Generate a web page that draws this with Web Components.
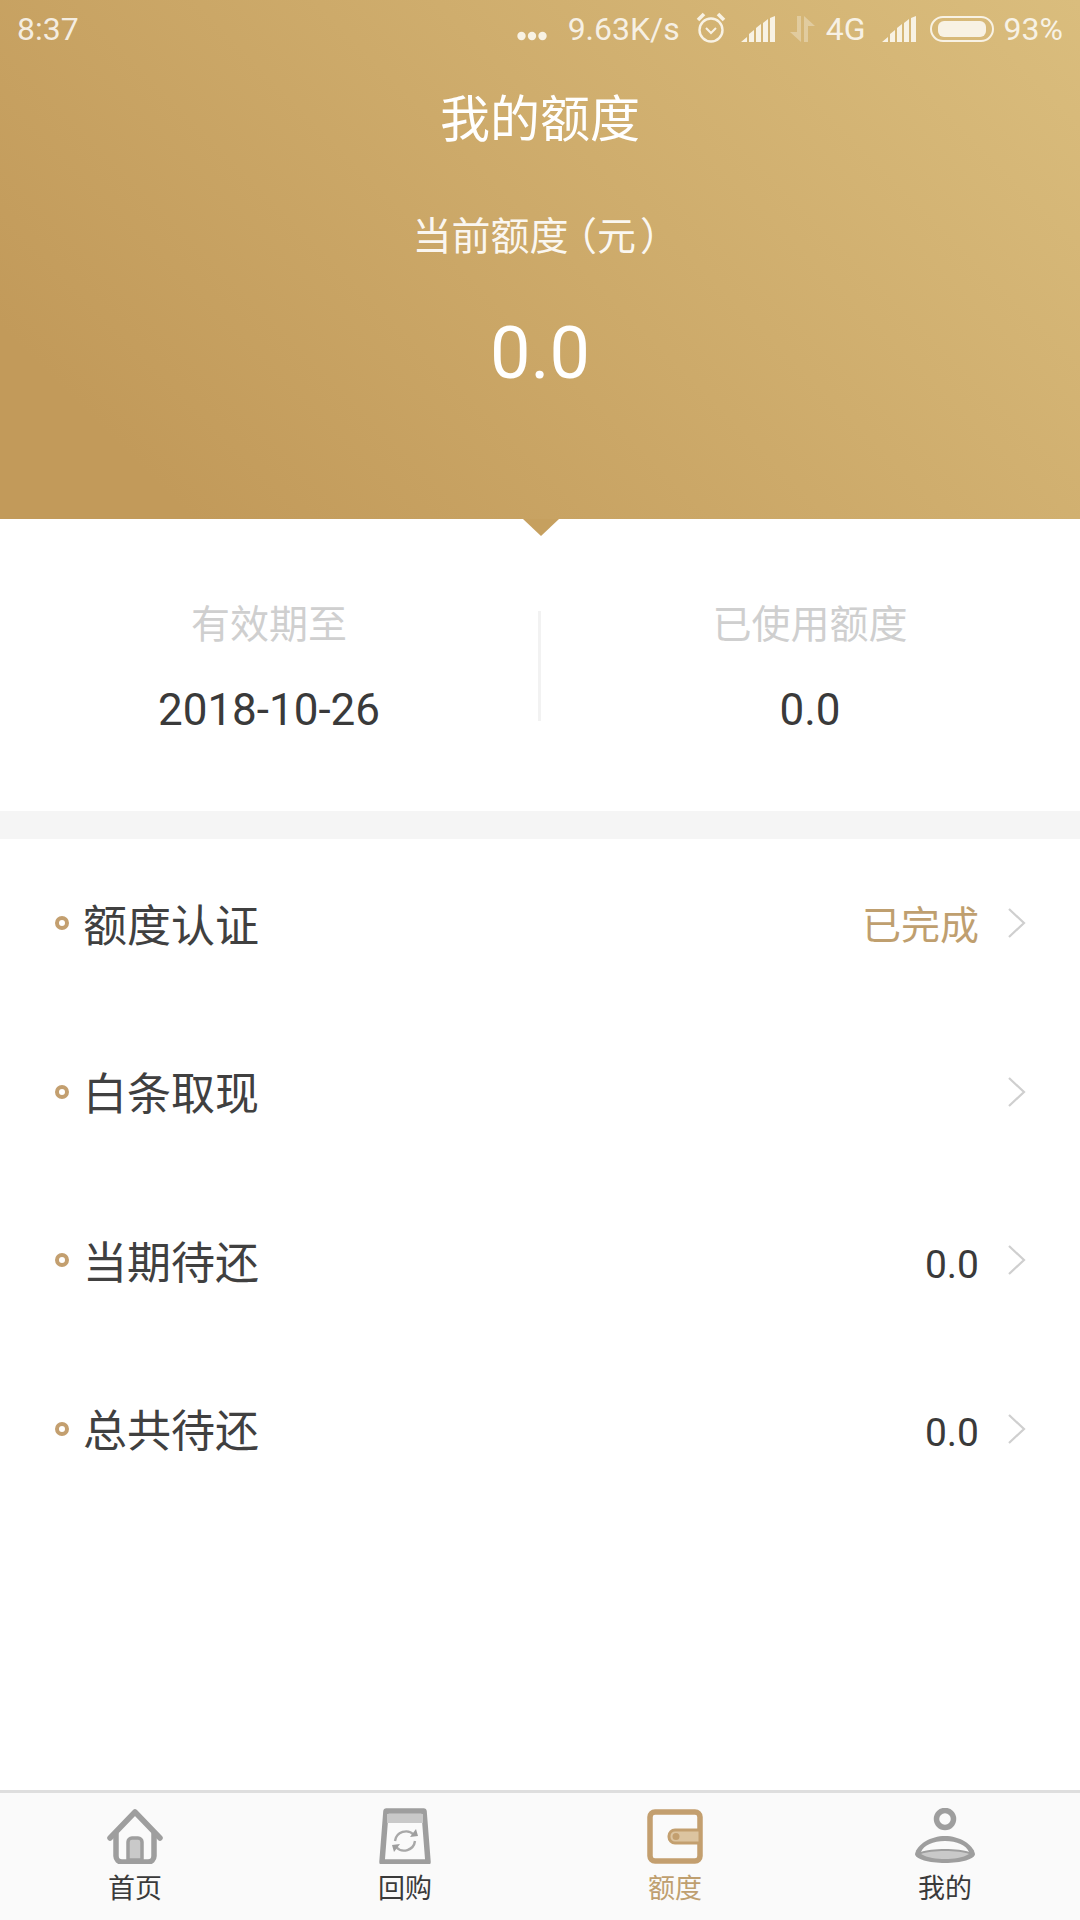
<!DOCTYPE html>
<html>
<head>
<meta charset="utf-8">
<style>
  html, body { margin: 0; padding: 0; background: #fff; }
  body { font-family: Roboto, "Noto Sans CJK SC", sans-serif; width: 1080px; height: 1920px; }
  quota-app { width: 1080px; height: 1920px; }
  .paren { font-feature-settings: "halt"; }
</style>
</head>
<body>
<quota-app>
  <quota-header slot="header" title="我的额度" amount="0.0">当前额度<span class="paren" style="margin-left:9px">（</span>元<span class="paren" style="margin-left:4px">）</span></quota-header>
  <quota-stats slot="stats">
    <stat-cell label="有效期至" value="2018-10-26"></stat-cell>
    <stat-cell label="已使用额度" value="0.0"></stat-cell>
  </quota-stats>
  <menu-row slot="menu" label="额度认证" value="已完成" gold></menu-row>
  <menu-row slot="menu" label="白条取现"></menu-row>
  <menu-row slot="menu" label="当期待还" value="0.0"></menu-row>
  <menu-row slot="menu" label="总共待还" value="0.0"></menu-row>
  <tab-bar slot="tabs">
    <tab-item icon="home" label="首页"></tab-item>
    <tab-item icon="bag" label="回购"></tab-item>
    <tab-item icon="wallet" label="额度" active></tab-item>
    <tab-item icon="user" label="我的"></tab-item>
  </tab-bar>
</quota-app>

<script>
const appTemplate = document.createElement('template');
appTemplate.innerHTML = `
  <style>
    :host { display: flex; flex-direction: column; color: #3a3a3a; }
    .gap { height: 28px; background: #f5f5f5; flex: none; }
    .menu { flex: 1; padding-top: 2px; }
  </style>
  <slot name="header"></slot>
  <slot name="stats"></slot>
  <div class="gap"></div>
  <div class="menu"><slot name="menu"></slot></div>
  <slot name="tabs"></slot>
`;
class QuotaApp extends HTMLElement {
  constructor() {
    super();
    this.attachShadow({ mode: 'open' }).appendChild(appTemplate.content.cloneNode(true));
  }
}

const statusTemplate = document.createElement('template');
statusTemplate.innerHTML = `
  <style>
    :host { display: flex; align-items: center; justify-content: space-between; height: 58px; padding: 0 17px;
      font-size: 32px; color: rgba(255,255,255,.82); }
    .right { display: flex; align-items: center; }
    svg { display: block; flex: none; }
    .dots { margin-right: 21px; margin-top: 13px; }
    .alarm { margin: -3px 15px 0 16px; }
    .net { margin: 0 11px 0 15px; }
    .sig2 { margin: 0 14px 0 16px; }
    .pct { margin-left: 10px; }
  </style>
  <span>8:37</span>
  <div class="right">
    <svg class="dots" width="30" height="10" viewBox="0 0 30 10" fill="#f8f2e4"><circle cx="4.5" cy="5" r="4.2"/><circle cx="15" cy="5" r="4.2"/><circle cx="25.5" cy="5" r="4.2"/></svg>
    <span>9.63K/s</span>
    <svg class="alarm" width="30" height="32" viewBox="0 0 30 32" fill="none" stroke="#f8f2e4" stroke-width="2.4">
      <circle cx="15" cy="18" r="11.5"/><path d="M10 16l5 5 5-5" stroke-width="2"/>
      <path d="M2 8l6-6M28 8l-6-6" stroke-width="3.6"/>
    </svg>
    <svg width="34" height="26" viewBox="0 0 34 26" fill="#f8f2e4"><path d="M0 26l6-5v5zM8 26v-8l5-4v12zM15 26V12l5-4v18zM22 26V7l5-4v23zM29 26V2l5-2v26z"/></svg>
    <svg class="net" width="25" height="26" viewBox="0 0 25 26" fill="rgba(255,255,255,.3)"><path d="M7 0h4v26L0 16h7zM14 0l11 10h-7v16h-4z"/></svg>
    <span>4G</span>
    <svg class="sig2" width="34" height="26" viewBox="0 0 34 26" fill="#f8f2e4"><path d="M0 26l6-5v5zM8 26v-8l5-4v12zM15 26V12l5-4v18zM22 26V7l5-4v23zM29 26V2l5-2v26z"/></svg>
    <svg width="64" height="26" viewBox="0 0 64 26"><rect x="1" y="1" width="62" height="24" rx="12" fill="none" stroke="#f8f2e4" stroke-width="2"/><rect x="8" y="5" width="48" height="16" rx="6" fill="#f8f2e4"/></svg>
    <span class="pct">93%</span>
  </div>
`;
class StatusBar extends HTMLElement {
  constructor() {
    super();
    this.attachShadow({ mode: 'open' }).appendChild(statusTemplate.content.cloneNode(true));
  }
}

const headerTemplate = document.createElement('template');
headerTemplate.innerHTML = `
  <style>
    :host { display: block; position: relative; height: 519px; flex: none; color: #fff; text-align: center;
      background: linear-gradient(45deg, #c29a5a 12%, #dabd7d 100%); }
    .title { font-size: 50px; line-height: 60px; margin-top: 32px; }
    .label { font-size: 39px; line-height: 50px; margin-top: 62px; padding-right: 8px; color: rgba(255,255,255,.92); }
    .amount { font-size: 72px; line-height: 84px; margin-top: 50px; }
    .arrow { position: absolute; left: 523px; top: 519px; width: 0; height: 0;
      border-left: 18px solid transparent; border-right: 18px solid transparent; border-top: 17px solid #c6a05f; }
  </style>
  <status-bar></status-bar>
  <div class="title"></div>
  <div class="label"><slot></slot></div>
  <div class="amount"></div>
  <div class="arrow"></div>
`;
class QuotaHeader extends HTMLElement {
  constructor() {
    super();
    const root = this.attachShadow({ mode: 'open' });
    root.appendChild(headerTemplate.content.cloneNode(true));
    root.querySelector('.title').textContent = this.getAttribute('title');
    root.querySelector('.amount').textContent = this.getAttribute('amount');
    this.removeAttribute('title');
  }
}

const statsTemplate = document.createElement('template');
statsTemplate.innerHTML = `
  <style>
    :host { display: grid; grid-template-columns: 538px 3px 1fr; align-items: center; height: 292px; flex: none; padding-right: 1px; box-sizing: border-box; }
    .line { width: 3px; height: 110px; background: #f2f2f2; margin-top: 2px; }
    ::slotted(stat-cell:first-child) { grid-column: 1; grid-row: 1; }
    ::slotted(stat-cell:last-child) { grid-column: 3; grid-row: 1; }
  </style>
  <slot></slot>
  <div class="line" style="grid-column:2;grid-row:1"></div>
`;
class QuotaStats extends HTMLElement {
  constructor() {
    super();
    this.attachShadow({ mode: 'open' }).appendChild(statsTemplate.content.cloneNode(true));
  }
}

const cellTemplate = document.createElement('template');
cellTemplate.innerHTML = `
  <style>
    :host { display: block; text-align: center; padding-top: 8px; }
    .label { font-size: 39px; line-height: 50px; color: #cfcfcf; }
    .value { font-size: 44px; line-height: 56px; margin-top: 32px; color: #3a3a3a; }
  </style>
  <div class="label"></div>
  <div class="value"></div>
`;
class StatCell extends HTMLElement {
  constructor() {
    super();
    const root = this.attachShadow({ mode: 'open' });
    root.appendChild(cellTemplate.content.cloneNode(true));
    root.querySelector('.label').textContent = this.getAttribute('label');
    root.querySelector('.value').textContent = this.getAttribute('value');
  }
}

const rowTemplate = document.createElement('template');
rowTemplate.innerHTML = `
  <style>
    :host { display: flex; align-items: center; height: 168.5px; padding: 0 53px 0 55px; box-sizing: border-box; }
    .dot { width: 14px; height: 14px; box-sizing: border-box; border: 4px solid #c39f6f; border-radius: 50%; flex: none; margin-top: -4px; }
    .label { font-size: 44px; margin: 0 0 5px 14px; flex: 1; color: #404040; }
    .value { font-size: 39px; color: #3a3a3a; margin-top: 5px; }
    :host([gold]) .value { color: #bf9f6f; margin-top: 0; margin-bottom: 6px; }
    svg { display: block; flex: none; margin-left: 28px; margin-top: -4px; }
  </style>
  <span class="dot"></span>
  <span class="label"></span>
  <span class="value"></span>
  <svg width="20" height="30" viewBox="0 0 20 30" fill="none" stroke="#cfcfcf" stroke-width="2.2"><path d="M2 1l15 14L2 29"/></svg>
`;
class MenuRow extends HTMLElement {
  constructor() {
    super();
    const root = this.attachShadow({ mode: 'open' });
    root.appendChild(rowTemplate.content.cloneNode(true));
    root.querySelector('.label').textContent = this.getAttribute('label');
    root.querySelector('.value').textContent = this.getAttribute('value') || '';
  }
}

const tabBarTemplate = document.createElement('template');
tabBarTemplate.innerHTML = `
  <style>
    :host { display: grid; grid-template-columns: repeat(4, 1fr); height: 127px; flex: none; background: #fafafa; border-top: 3px solid #dedede; }
  </style>
  <slot></slot>
`;
class TabBar extends HTMLElement {
  constructor() {
    super();
    this.attachShadow({ mode: 'open' }).appendChild(tabBarTemplate.content.cloneNode(true));
  }
}

const tabIcons = {
  home: `<svg width="60" height="56" viewBox="0 0 60 56" fill="none">
    <path d="M23 52V34a4 4 0 0 1 4-4h6a4 4 0 0 1 4 4v18z" fill="#c9c9c9" stroke="#9e9e9e" stroke-width="3.5"/>
    <path d="M5 30L30 4l25 26" stroke="#9e9e9e" stroke-width="5.5" stroke-linecap="round" stroke-linejoin="round"/>
    <path d="M11 25v23a6 6 0 0 0 6 6h26a6 6 0 0 0 6-6V25" stroke="#9e9e9e" stroke-width="5.5"/>
  </svg>`,
  bag: `<svg width="60" height="56" viewBox="0 0 60 56" fill="none">
    <path d="M11 3h38l4 51H7z" fill="#fafafa" stroke="#9e9e9e" stroke-width="5.5" stroke-linejoin="round"/>
    <path d="M12 6h36v9H12z" fill="#c9c9c9"/>
    <path d="M20 33a11 11 0 0 1 19-6M40 33a11 11 0 0 1-19 6" stroke="#a8a8a8" stroke-width="2.4"/>
    <path d="M35 29l8-1-2-7zM25 36l-8 1 2 7z" fill="#9e9e9e"/>
  </svg>`,
  wallet: `<svg width="60" height="56" viewBox="0 0 60 56" fill="none">
    <rect x="5" y="4" width="50" height="49" rx="5" stroke="#c39f6f" stroke-width="5.5" fill="#fafafa"/>
    <path d="M55 22H30a6 6 0 0 0-6 6v1a6 6 0 0 0 6 6h25z" fill="#dcc4a0" stroke="#c39f6f" stroke-width="3"/>
    <circle cx="31" cy="28.5" r="3.5" fill="#c39f6f"/>
  </svg>`,
  user: `<svg width="64" height="56" viewBox="0 0 64 56" fill="none">
    <circle cx="32" cy="11" r="8.5" stroke="#9e9e9e" stroke-width="5.5"/>
    <path d="M2 46C4 36 18 28 32 28s28 8 30 18c0 5-14 9-30 9S2 51 2 46z" fill="#9e9e9e"/>
    <path d="M8 44C11 37 20 33 32 33s21 4 24 11C47 40 17 40 8 44z" fill="#fafafa"/>
    <path d="M8 46c9-4 39-4 48 0-6 4-16 5-24 5S14 50 8 46z" fill="#c9c9c9"/>
  </svg>`
};

const tabTemplate = document.createElement('template');
tabTemplate.innerHTML = `
  <style>
    :host { display: flex; flex-direction: column; align-items: center; padding-top: 15px; color: #3a3a3a; }
    :host([active]) { color: #bf9f6f; }
    .icon { height: 56px; }
    svg { display: block; }
    .label { font-size: 27px; line-height: 36px; margin-top: 7px; }
  </style>
  <div class="icon"></div>
  <div class="label"></div>
`;
class TabItem extends HTMLElement {
  constructor() {
    super();
    const root = this.attachShadow({ mode: 'open' });
    root.appendChild(tabTemplate.content.cloneNode(true));
    root.querySelector('.icon').innerHTML = tabIcons[this.getAttribute('icon')];
    root.querySelector('.label').textContent = this.getAttribute('label');
  }
}

customElements.define('status-bar', StatusBar);
customElements.define('quota-app', QuotaApp);
customElements.define('quota-header', QuotaHeader);
customElements.define('stat-cell', StatCell);
customElements.define('quota-stats', QuotaStats);
customElements.define('menu-row', MenuRow);
customElements.define('tab-item', TabItem);
customElements.define('tab-bar', TabBar);
</script>
</body>
</html>
